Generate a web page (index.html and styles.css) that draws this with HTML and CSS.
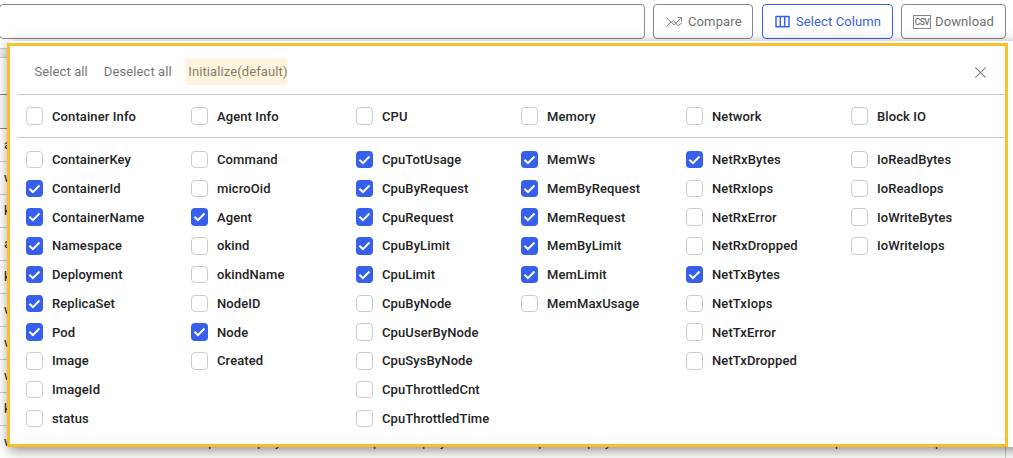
FILE: index.html
```
<!DOCTYPE html>
<html lang="en">
<head>
<meta charset="utf-8">
<title>Select Column</title>
<link rel="stylesheet" href="styles.css">
</head>
<body>
<div class="page">
  <header class="toolbar">
    <div class="search"></div>
    <button class="btn compare"><svg width="17" height="14" viewBox="0 0 17 14"><path d="M.5 11.5l4.6-4.6L8.3 10l6.9-7.4M11.5 2.5h4v4M.5 2.7l4.8 4.8 2.2-2.2 4.4 5.4L15.8 8"/></svg><span>Compare</span></button>
    <button class="btn active columns"><svg width="15" height="13" viewBox="0 0 15 13"><path d="M.8 1.5h13.4M.8 11.8h13.4M1 1v11M5.3 1v11M9.7 1v11M14 1v11"/></svg><span>Select Column</span></button>
    <button class="btn download"><span class="csv">CSV</span><span>Download</span></button>
  </header>
  <main class="table">
    <div class="band"></div><div class="filter"></div><div class="head"></div>
    <div class="row">a</div><div class="row">w</div><div class="row">k</div><div class="row">a</div><div class="row">k</div>
    <div class="row">w</div><div class="row">w</div><div class="row">w</div><div class="row">k</div>
    <div class="row last"><span>w</span><span>whatap</span><span>deploy</span><span>whatap</span><span>deploy</span><span>whatap</span><span>deploy</span><span>p</span><span>p</span></div>
  </main>
  <section class="panel"></section>
  <section class="dialog">
    <div class="actions"><span>Select all</span><span>Deselect all</span><span class="marked">Initialize(default)</span>
      <svg class="close" width="13" height="13" viewBox="0 0 13 13"><path d="M1.3 1.3l10.4 10.4M11.7 1.3L1.3 11.7"/></svg></div>
    <div class="groups" id="groups"></div>
    <div class="lists" id="lists"></div>
  </section>
</div>
<script src="script.js"></script>
</body>
</html>
```
FILE: script.js
```
// A leading asterisk marks a selected column.
const groups = {
  "Container Info": ["ContainerKey", "*ContainerId", "*ContainerName", "*Namespace", "*Deployment", "*ReplicaSet", "*Pod", "Image", "ImageId", "status"],
  "Agent Info": ["Command", "microOid", "*Agent", "okind", "okindName", "NodeID", "*Node", "Created"],
  "CPU": ["*CpuTotUsage", "*CpuByRequest", "*CpuRequest", "*CpuByLimit", "*CpuLimit", "CpuByNode", "CpuUserByNode", "CpuSysByNode", "CpuThrottledCnt", "CpuThrottledTime"],
  "Memory": ["*MemWs", "*MemByRequest", "*MemRequest", "*MemByLimit", "*MemLimit", "MemMaxUsage"],
  "Network": ["*NetRxBytes", "NetRxIops", "NetRxError", "NetRxDropped", "*NetTxBytes", "NetTxIops", "NetTxError", "NetTxDropped"],
  "Block IO": ["IoReadBytes", "IoReadIops", "IoWriteBytes", "IoWriteIops"]
};
const tick = '<svg width="17" height="17" viewBox="0 0 17 17"><path d="M3.4 8.8l3.5 3.3 6.6-6.6"/></svg>';
function item(name) {
  const on = name[0] === "*";
  return `<label class="item"><span class="box${on ? " on" : ""}">${on ? tick : ""}</span><span>${on ? name.slice(1) : name}</span></label>`;
}
document.getElementById("groups").innerHTML = Object.keys(groups).map(item).join("");
document.getElementById("lists").innerHTML = Object.values(groups).map(g => `<div class="list">${g.map(item).join("")}</div>`).join("");
```
FILE: styles.css
```
* { box-sizing: border-box; }
body { margin: 0; font-family: Roboto, sans-serif; background: #fff; }
.page { position: relative; width: 1013px; height: 458px; overflow: hidden; }
.toolbar { display: flex; height: 48px; padding-top: 4px; }
.search { width: 646px; height: 35px; margin: 0 8px 0 -1px; border: 1px solid #888; border-radius: 4px; }
.btn { display: flex; align-items: center; height: 35px; padding: 0 0 0 12px; border: 1px solid #888; border-radius: 4px; background: #fff; color: #707070; font: 400 13px Roboto, sans-serif; letter-spacing: .12px; white-space: nowrap; }
.btn svg { fill: none; stroke: #858585; stroke-width: 1; }
.compare { width: 100px; margin-right: 9px; gap: 5px; }
.active { width: 131px; margin-right: 8px; gap: 6px; border-color: #3660eb; color: #3660eb; letter-spacing: .1px; }
.active svg { stroke: #3660eb; stroke-width: 1.5; }
.download { width: 105px; gap: 4px; padding-left: 11px; }
.csv { width: 18px; height: 14px; border: 1px solid #858585; font-size: 8.5px; line-height: 12px; font-weight: 500; display: flex; justify-content: center; letter-spacing: -.5px; }
.table { width: 1006px; height: 410px; border-right: 1px solid #ccc; }
.band { height: 10px; background: #eee; border: solid #ccc; border-width: 1px 0; }
.filter { height: 37px; border-bottom: 1px solid #888; }
.head { height: 34px; background: #fafafa; border-bottom: 1px solid #888; }
.row { height: 33px; padding-left: 4px; border-bottom: 1px solid #ccc; font-size: 13px; line-height: 31px; color: #222; }
.last { display: grid; grid-template-columns: 169px 70px 95px 70px 95px 70px 262px 100px 40px; border: 0; }
.panel { position: absolute; left: 9px; top: 41px; width: 1020px; height: 406px; background: #fff; box-shadow: 0 3px 12px rgba(0,0,0,.48); }
.dialog { position: absolute; left: 7px; top: 43px; width: 1001px; height: 404px; border: 3px solid #fac02b; background: #fff; padding-left: 7px; }
.actions { display: flex; align-items: center; height: 49px; padding: 0 18px 0 17.5px; gap: 16px; border-bottom: 1px solid #ccc; font-size: 13px; letter-spacing: .1px; color: #757575; }
.actions span { line-height: 27px; margin-top: 3px; white-space: nowrap; }
.actions .marked { width: 101px; margin-left: -1.5px; padding-left: 2px; background: #fef4dd; color: #877e6c; }
.close { margin: 4px 0 0 auto; fill: none; stroke: #858585; stroke-width: 1.2; }
.groups, .lists { display: grid; grid-template-columns: repeat(6, 165px); padding-left: 9px; }
.groups { height: 43px; border-bottom: 1px solid #ccc; align-items: center; }
.lists { padding-top: 7.2px; }
.item { display: flex; align-items: center; height: 28.75px; gap: 9px; color: #222; font-size: 13px; font-weight: 500; letter-spacing: .1px; white-space: nowrap; }
.box { flex: none; width: 17px; height: 17.5px; border: 1px solid #ccc; border-radius: 4px; background: #fff; }
.on { border: 0; background: #3660eb; }
.on svg { display: block; fill: none; stroke: #fff; stroke-width: 2; }
```
